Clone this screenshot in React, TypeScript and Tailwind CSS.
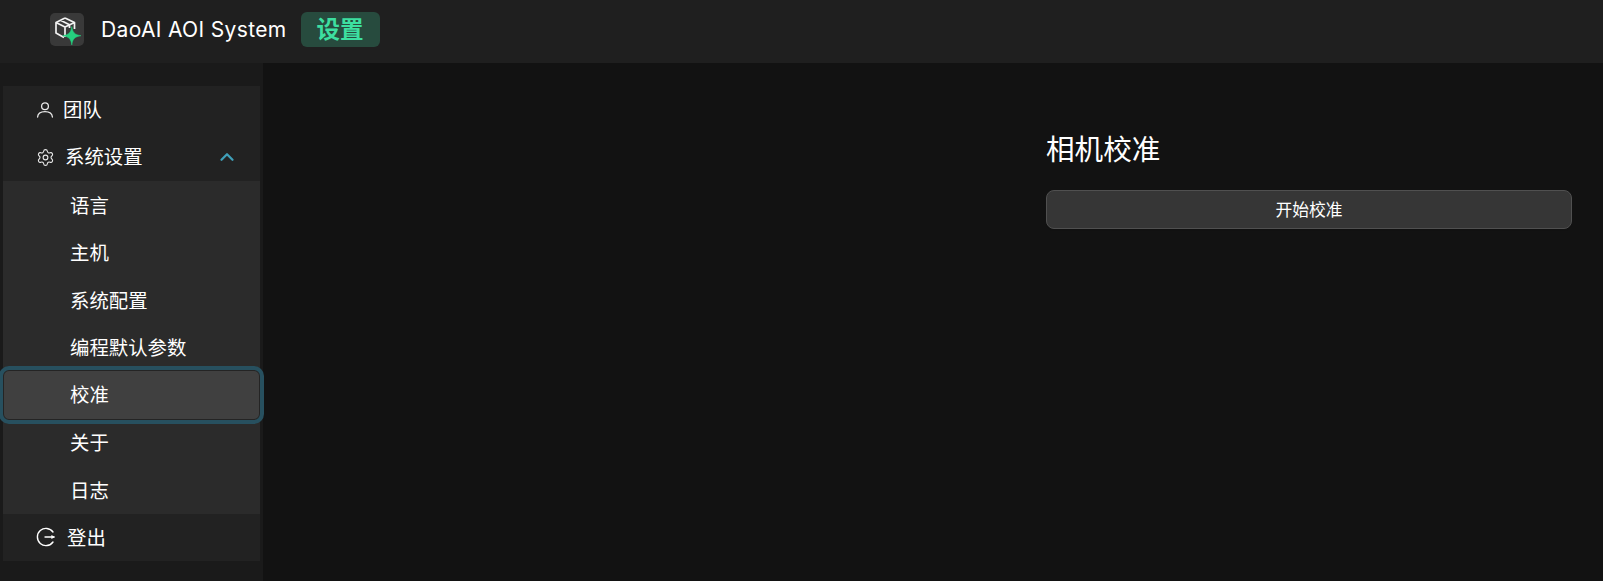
import { ChevronUp, Settings } from 'lucide-react'

const subItems = ['语言', '主机', '系统配置', '编程默认参数', '校准', '关于', '日志']

function Logo() {
  return (
    <div className="flex h-[33px] w-[34px] items-center justify-center rounded-[5px] bg-[#393939]">
      <svg width="34" height="33" viewBox="0 0 34 33" fill="none">
        <path d="M15 5 L24.5 9.5 V16 M15 5 L6 9.5 V20 L14 24.5 M6 9.5 L15 14 L24.5 9.5 M15 14 V24 M10.5 7.2 L19.5 11.8 V15" stroke="#f2f2f2" strokeWidth="1.7" strokeLinejoin="round" />
        <path d="M21.8 13.5 C22.6 19.6 24.6 21.6 31 22.7 C24.6 23.8 22.6 25.8 21.8 32 C21 25.8 19 23.8 12.6 22.7 C19 21.6 21 19.6 21.8 13.5 Z" fill="#25d07f" stroke="#25d07f" strokeWidth="0.5" />
      </svg>
    </div>
  )
}

function UserIcon() {
  return (
    <svg width="18" height="18" viewBox="0 0 18 18" fill="none" stroke="#e8e8e8" strokeWidth="1.3" strokeLinecap="round">
      <circle cx="9" cy="5.2" r="3.4" />
      <path d="M1.6 16 C1.8 12.4 4.8 10.6 9 10.6 C13.2 10.6 16.2 12.4 16.4 16" />
    </svg>
  )
}

function LogoutIcon() {
  return (
    <svg width="20" height="20" viewBox="0 0 20 20" fill="none" stroke="#ffffff" strokeWidth="1.4" strokeLinecap="round">
      <path d="M17 5 A8.6 8.6 0 1 0 17 15" />
      <path d="M9 10 H18" />
      <path d="M15.4 8 L19 10 L15.4 12 Z" fill="#ffffff" stroke="none" />
    </svg>
  )
}

export default function App() {
  return (
    <div className="flex h-[581px] flex-col overflow-hidden bg-[#121212] font-['Inter','Noto_Sans_CJK_SC',sans-serif] text-white">
      <header className="flex h-[63px] shrink-0 items-center bg-[#1f1f1f] pb-[4px] pl-[50px]">
        <Logo />
        <span className="ml-[17px] text-[21px] tracking-[0.35px] text-white">DaoAI AOI System</span>
        <span className="ml-[14px] flex h-[35px] w-[79px] items-center justify-center rounded-[6px] bg-[#274b3e] text-[23.5px] font-bold text-[#3ddfa0]">设置</span>
      </header>

      <div className="flex min-h-0 flex-1">
        <aside className="w-[263px] shrink-0 bg-[#1a1a1a] px-[3px] pt-[23px]">
          <div className="bg-[#222222] text-[19.4px]">
            <div className="flex h-[47.5px] items-center pl-[33px]">
              <UserIcon />
              <span className="ml-[9px] pt-[2px]">团队</span>
            </div>
            <div className="flex h-[47.5px] items-center pl-[33px] pr-[22px]">
              <Settings size={19} strokeWidth={1.4} className="text-[#e8e8e8]" />
              <span className="ml-[10px] pt-[1px]">系统设置</span>
              <ChevronUp size={22} strokeWidth={2.5} className="ml-auto text-[#3f9fb8]" />
            </div>
            <div className="bg-[#2b2b2b]">
              {subItems.map((item) => (
                <div
                  key={item}
                  className={
                    item === '校准'
                      ? 'relative z-10 -my-[1px] flex h-[49.5px] items-center rounded-[6px] border border-[#242424] bg-[#404040] pl-[66px] pt-[2px] outline-4 outline-[#27505f]'
                      : 'flex h-[47.5px] items-center pl-[67px] pt-[3px]'
                  }
                >
                  {item}
                </div>
              ))}
            </div>
            <div className="flex h-[47.5px] items-center pl-[33px]">
              <LogoutIcon />
              <span className="ml-[11px] pt-[3px]">登出</span>
            </div>
          </div>
        </aside>

        <main className="flex-1 pl-[783px] pr-[31px] pt-[67px]">
          <h2 className="text-[28.6px] leading-[40px]">相机校准</h2>
          <button className="mt-[20px] h-[39px] w-full rounded-[8px] border border-[#505050] bg-[#363636] pt-[3px] text-[16.8px] text-white shadow-[0_2px_0_rgba(0,0,0,0.04)]">
            开始校准
          </button>
        </main>
      </div>
    </div>
  )
}
